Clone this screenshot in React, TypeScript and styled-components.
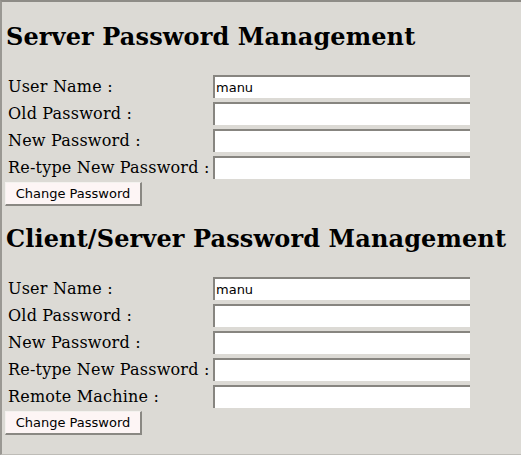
import styled, { createGlobalStyle } from 'styled-components';

const GlobalStyle = createGlobalStyle`
  html, body {
    margin: 0;
    padding: 0;
    background: #dcdad5;
  }
`;

interface Section {
  title: string;
  fields: { label: string; value?: string; type?: string }[];
}

const sections: Section[] = [
  {
    title: 'Server Password Management',
    fields: [
      { label: 'User Name :', value: 'manu' },
      { label: 'Old Password :', type: 'password' },
      { label: 'New Password :', type: 'password' },
      { label: 'Re-type New Password :', type: 'password' },
    ],
  },
  {
    title: 'Client/Server Password Management',
    fields: [
      { label: 'User Name :', value: 'manu' },
      { label: 'Old Password :', type: 'password' },
      { label: 'New Password :', type: 'password' },
      { label: 'Re-type New Password :', type: 'password' },
      { label: 'Remote Machine :' },
    ],
  },
];

export default function App() {
  return (
    <>
      <GlobalStyle />
      <Frame>
        {sections.map((section) => (
          <PasswordForm key={section.title} onSubmit={(e) => e.preventDefault()}>
            <Title>{section.title}</Title>
            <FieldGrid>
              {section.fields.map((field) => (
                <Row key={field.label}>
                  <Label>{field.label}</Label>
                  <TextInput type={field.type ?? 'text'} defaultValue={field.value ?? ''} />
                </Row>
              ))}
            </FieldGrid>
            <SubmitButton type="submit">Change Password</SubmitButton>
          </PasswordForm>
        ))}
      </Frame>
    </>
  );
}

const Frame = styled.div`
  box-sizing: border-box;
  height: 455px;
  border-left: 2px solid #9a9893;
  border-top: 2px solid #8e8c87;
  border-bottom: 1px solid #bebcb7;
  padding: 0 0 0 4px;
  display: flex;
  flex-direction: column;
`;

const PasswordForm = styled.form`
  display: flex;
  flex-direction: column;
  align-items: flex-start;
  margin-top: 21px;

  & + & {
    margin-top: 19px;
  }
`;

const Title = styled.h2`
  margin: 0;
  font-family: 'DejaVu Serif', serif;
  font-weight: bold;
  font-size: 24px;
  line-height: 28px;
  letter-spacing: 0.12px;
  color: #000;
`;

const FieldGrid = styled.div`
  display: flex;
  flex-direction: column;
  gap: 4px;
  margin-top: 24px;
  padding-left: 2px;
`;

const Row = styled.div`
  display: grid;
  grid-template-columns: 205px 257px;
  align-items: center;
  height: 23px;
`;

const Label = styled.label`
  font-family: 'DejaVu Serif', serif;
  font-size: 16px;
  letter-spacing: 0.2px;
  color: #000;
  white-space: nowrap;
`;

const TextInput = styled.input`
  box-sizing: border-box;
  width: 257px;
  height: 23px;
  margin: 0;
  padding: 0 1px;
  border-style: solid;
  border-width: 2px 0 0 2px;
  border-color: #878580;
  background: #fff;
  font-family: 'DejaVu Sans', sans-serif;
  font-size: 13px;
  color: #000;
  outline: none;
`;

const SubmitButton = styled.button`
  box-sizing: border-box;
  margin: 3px 0 0 -1px;
  width: 137px;
  height: 24px;
  padding: 0;
  background: #fdf5f5;
  border-style: solid;
  border-width: 1px 2px 2px 1px;
  border-color: #f4f2ef #8a8883 #8a8883 #f4f2ef;
  font-family: 'DejaVu Sans', sans-serif;
  font-size: 13px;
  color: #000;
  cursor: pointer;
`;
